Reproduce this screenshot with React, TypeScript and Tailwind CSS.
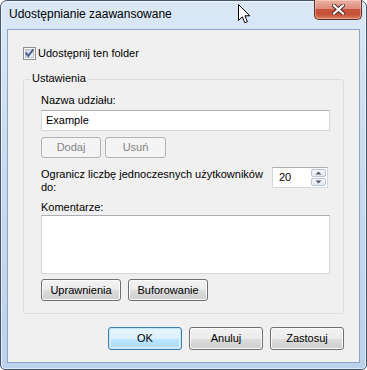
import React from "react";

type BtnProps = {
  children: React.ReactNode;
  kind?: "normal" | "default" | "disabled";
  className?: string;
};

function Btn({ children, kind = "normal", className = "" }: BtnProps) {
  const base =
    "flex items-center justify-center rounded-[3px] border leading-[15px] " +
    className +
    " ";
  if (kind === "disabled") {
    return (
      <div className={base + "border-[#adb2b5] bg-[#f4f4f4] text-[#838383]"}>
        {children}
      </div>
    );
  }
  if (kind === "default") {
    return (
      <div
        className={
          base +
          "border-[#3c7fb1] bg-[linear-gradient(to_bottom,#eaf6fd_0%,#d9f0fc_50%,#bee6fd_50%,#a7d9f5_100%)] shadow-[inset_0_0_0_1px_#bfe5f9,inset_0_0_0_2px_#dff2fd] text-black"
        }
      >
        {children}
      </div>
    );
  }
  return (
    <div
      className={
        base +
        "border-[#707070] bg-[linear-gradient(to_bottom,#f2f2f2_0%,#ebebeb_50%,#dddddd_50%,#cfcfcf_100%)] shadow-[inset_0_0_0_1px_#fcfcfc] text-black"
      }
    >
      {children}
    </div>
  );
}

function CheckBox() {
  return (
    <svg width="13" height="13" viewBox="0 0 13 13" className="shrink-0">
      <defs>
        <linearGradient id="cbg" x1="0" y1="0" x2="1" y2="1">
          <stop offset="0" stopColor="#cbcfd5" />
          <stop offset="1" stopColor="#f7f7f7" />
        </linearGradient>
      </defs>
      <rect x="0.5" y="0.5" width="12" height="12" fill="#f6f6f6" stroke="#8e8f8f" />
      <rect x="2.5" y="2.5" width="8" height="8" fill="url(#cbg)" stroke="#c0c5cc" />
      <path
        d="M3.2 6.4 L5.3 8.9 L9.8 3.2"
        stroke="#4a5e96"
        strokeWidth="1.9"
        fill="none"
        strokeLinecap="square"
      />
    </svg>
  );
}

function CloseGlyph() {
  return (
    <svg width="13" height="11" viewBox="0 0 13 11">
      <path
        d="M2 1.5 L11 9.5 M11 1.5 L2 9.5"
        stroke="#4a2a26"
        strokeWidth="4"
        strokeLinecap="square"
      />
      <path
        d="M2 1.5 L11 9.5 M11 1.5 L2 9.5"
        stroke="#ffffff"
        strokeWidth="2.2"
        strokeLinecap="square"
      />
    </svg>
  );
}

function Cursor() {
  return (
    <svg
      width="14"
      height="21"
      viewBox="0 0 14 21"
      className="absolute left-[238px] top-[4px]"
    >
      <path
        d="M0.5 0.5 L0.5 16.5 L4.3 12.8 L6.9 18.8 L9.4 17.7 L6.9 11.8 L11.8 11.8 Z"
        fill="#ffffff"
        stroke="#000000"
        strokeWidth="1"
        strokeLinejoin="miter"
      />
    </svg>
  );
}

function SpinArrow({ up }: { up: boolean }) {
  return (
    <svg width="7" height="4" viewBox="0 0 7 4">
      <path d={up ? "M0.5 3.5 L3.5 0.5 L6.5 3.5 Z" : "M0.5 0.5 L3.5 3.5 L6.5 0.5 Z"} fill="#4d5a6b" />
    </svg>
  );
}

export default function App() {
  return (
    <div className="relative w-[367px] h-[370px] font-['Liberation_Sans',Arial,sans-serif] text-[11px] text-black">
      <div className="w-full h-full flex flex-col border border-[#46566b] rounded-t-[7px] rounded-b-[5px] bg-[linear-gradient(to_bottom,#dbe8f6_0%,#cadcf0_40%,#bcd2ec_100%)] shadow-[inset_0_0_0_1px_rgba(255,255,255,0.55)]">
        {/* Title bar */}
        <div className="h-[28px] flex items-start pl-[8px] pr-[4px] shrink-0">
          <div className="mt-[6px] text-[12px] leading-[15px] text-black">
            Udostępnianie zaawansowane
          </div>
          <div className="ml-auto mt-[-1px] w-[48px] h-[20px] flex items-center justify-center rounded-b-[5px] border border-t-0 border-[#5c3129] bg-[linear-gradient(to_bottom,#eeb3a5_0%,#dc8d7d_45%,#c8543c_50%,#c65139_75%,#d88060_100%)] shadow-[inset_0_0_0_1px_rgba(255,220,210,0.45)]">
            <CloseGlyph />
          </div>
        </div>

        {/* Client area */}
        <div className="flex-1 flex px-[6px] pb-[6px]">
          <div className="flex-1 flex flex-col border border-[#8ca5c4] bg-[#f0f0f0] px-[15px]">
            <div className="mt-[17px] h-[13px] flex items-center gap-[2px]">
              <CheckBox />
              <span className="leading-[13px]">Udostępnij ten folder</span>
            </div>

            <fieldset className="mt-[11px] border border-[#d5dfe5] rounded-[3px] pb-[12px]">
              <legend className="ml-[6px] px-[2px] leading-[15px] pb-[2px]">Ustawienia</legend>
              <div className="flex flex-col pl-[17px] pr-[13px] pt-[5px]">
                <div className="leading-[15px] h-[15px]">Nazwa udziału:</div>
                <div className="mt-[2px] h-[21px] flex items-center border border-[#d4d8de] border-t-[#abadb3] bg-white pl-[4px]">
                  Example
                </div>
                <div className="mt-[6px] flex gap-[4px]">
                  <Btn kind="disabled" className="w-[60px] h-[21px]">
                    Dodaj
                  </Btn>
                  <Btn kind="disabled" className="w-[61px] h-[21px]">
                    Usuń
                  </Btn>
                </div>
                <div className="mt-[9px] flex items-start justify-between">
                  <div className="leading-[13px] pt-[1px]">
                    Ogranicz liczbę jednoczesnych użytkowników
                    <br />
                    do:
                  </div>
                  <div className="w-[56px] h-[21px] flex items-stretch border border-[#d4d8de] border-t-[#abadb3] bg-white mr-[2px]">
                    <div className="flex-1 flex items-center pl-[6px]">20</div>
                    <div className="w-[16px] flex flex-col gap-[1px] py-[1px] pr-[1px]">
                      <div className="flex-1 flex items-center justify-center rounded-[2px] border border-[#b8c4d2] bg-[linear-gradient(to_bottom,#f6f8fa,#e2e7ee)]">
                        <SpinArrow up={true} />
                      </div>
                      <div className="flex-1 flex items-center justify-center rounded-[2px] border border-[#b8c4d2] bg-[linear-gradient(to_bottom,#f6f8fa,#e2e7ee)]">
                        <SpinArrow up={false} />
                      </div>
                    </div>
                  </div>
                </div>
                <div className="mt-[7px] leading-[12px] h-[12px]">Komentarze:</div>
                <div className="mt-[2px] h-[59px] border border-[#d4d8de] border-t-[#abadb3] bg-white" />
                <div className="mt-[5px] flex gap-[7px]">
                  <Btn className="w-[80px] h-[22px]">Uprawnienia</Btn>
                  <Btn className="w-[80px] h-[22px]">Buforowanie</Btn>
                </div>
              </div>
            </fieldset>

            <div className="mt-[13px] flex justify-end gap-[7px]">
              <Btn kind="default" className="w-[74px] h-[23px]">
                OK
              </Btn>
              <Btn className="w-[74px] h-[23px]">Anuluj</Btn>
              <Btn className="w-[74px] h-[23px]">Zastosuj</Btn>
            </div>
          </div>
        </div>
      </div>
      <Cursor />
    </div>
  );
}
